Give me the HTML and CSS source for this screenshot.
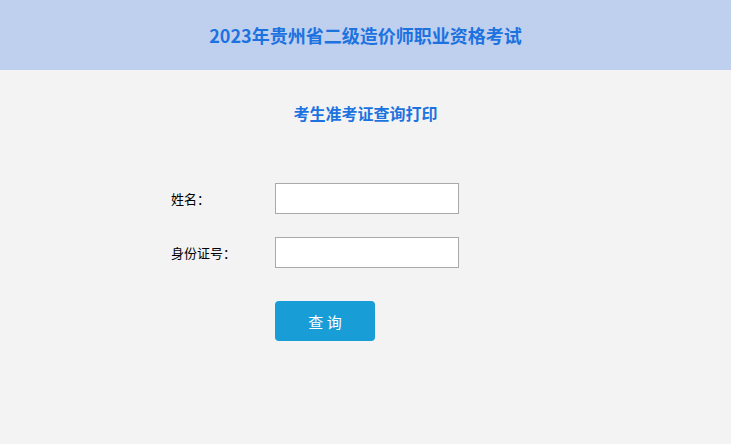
FILE: index.html
```html
<!DOCTYPE html>
<html>
<head>
    <meta charset="utf-8">
    <title>2023年贵州省二级造价师职业资格考试</title>
    <link rel="stylesheet" href="styles.css">
</head>
<body>
    <div class="header">
        <h1>2023年贵州省二级造价师职业资格考试</h1>
    </div>
    <div class="main">
        <h2 class="subtitle">考生准考证查询打印</h2>
        <form class="query-form" onsubmit="return false;">
            <div class="row">
                <label class="label" for="name">姓名：</label>
                <input class="field" type="text" id="name">
            </div>
            <div class="row">
                <label class="label" for="idcard">身份证号：</label>
                <input class="field" type="text" id="idcard">
            </div>
            <div class="row btn-row">
                <button class="btn" type="submit">查 询</button>
            </div>
        </form>
    </div>
</body>
</html>
```

FILE: styles.css
```css
html, body {
    margin: 0;
    padding: 0;
    height: 100%;
}

body {
    background-color: #f3f3f3;
    font-family: "Microsoft YaHei", "Noto Sans CJK SC", sans-serif;
    color: #000;
}

.header {
    height: 70px;
    background-color: #bfcfee;
    display: flex;
    align-items: center;
    justify-content: center;
}

.header h1 {
    margin: 0;
    font-size: 18px;
    font-weight: bold;
    color: #1c73e0;
}

.main {
    padding-top: 31px;
}

.subtitle {
    margin: 0;
    text-align: center;
    font-size: 16px;
    font-weight: bold;
    color: #1c73e0;
}

.query-form {
    padding-left: 171px;
    padding-top: 58px;
}

.row {
    display: flex;
    align-items: center;
    height: 31px;
    margin-bottom: 23px;
}

.label {
    width: 104px;
    font-size: 13px;
}

.field {
    width: 184px;
    height: 31px;
    box-sizing: border-box;
    border: 1px solid #a9a9a9;
    background: #fff;
    margin: 0;
    padding: 0 5px;
}

.btn-row {
    padding-left: 104px;
    height: 40px;
    margin-top: 33px;
}

.btn {
    width: 100px;
    height: 40px;
    border: none;
    border-radius: 4px;
    background-color: #189dd7;
    color: #fff;
    font-family: inherit;
    font-size: 15px;
    cursor: pointer;
}
```
